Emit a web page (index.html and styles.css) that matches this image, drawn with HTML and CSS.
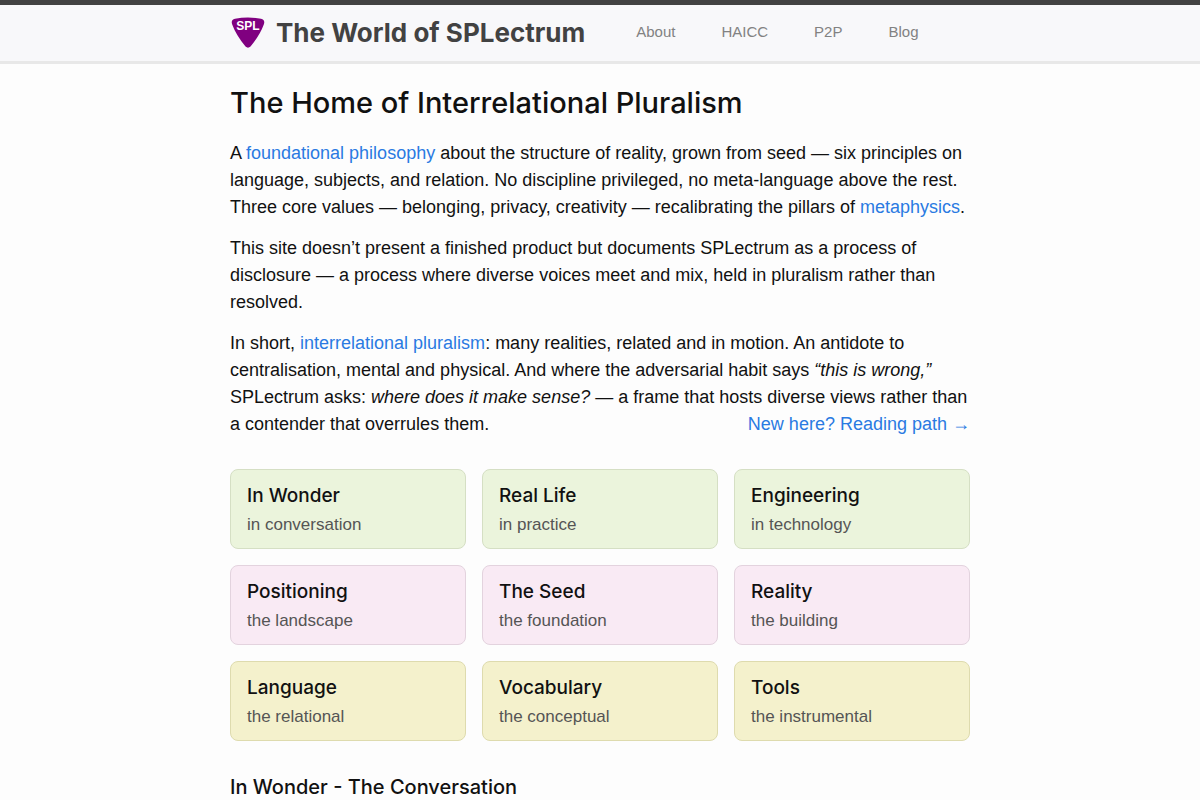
FILE: index.html
```html
<!DOCTYPE html>
<html lang="en">
<head>
<meta charset="utf-8">
<meta name="viewport" content="width=device-width, initial-scale=1">
<title>The World of SPLectrum</title>
<link rel="stylesheet" href="styles.css">
</head>
<body>
<header class="site-header">
  <div class="wrapper header-row">
    <a class="brand" href="#">
      <svg class="logo" viewBox="0 0 35 34" role="img" aria-label="SPL">
        <path d="M5 2.800Q18 .2 31 2.800Q35.500 4 33.800 8.500Q30 19 20.500 30.500Q18 32.800 15.500 30.500Q6 19 2.200 8.500Q.5 4 5 2.800Z" fill="#800080"/>
        <text class="logo-text" x="18" y="14" text-anchor="middle">SPL</text>
      </svg>
      <span class="brand-name">The World of SPLectrum</span>
    </a>
    <nav class="site-nav">
      <a href="#">About</a>
      <a href="#">HAICC</a>
      <a href="#">P2P</a>
      <a href="#">Blog</a>
    </nav>
  </div>
</header>
<main class="wrapper content">
  <h1>The Home of Interrelational Pluralism</h1>
  <p>A <a href="#">foundational philosophy</a> about the structure of reality, grown from seed — six principles on language, subjects, and relation. No discipline privileged, no meta-language above the rest. Three core values — belonging, privacy, creativity — recalibrating the pillars of <a href="#">metaphysics</a>.</p>
  <p>This site doesn’t present a finished product but documents SPLectrum as a process of disclosure — a process where diverse voices meet and mix, held in pluralism rather than resolved.</p>
  <p class="summary">In short, <a href="#">interrelational pluralism</a>: many realities, related and in motion. An antidote to centralisation, mental and physical. And where the adversarial habit says <em>“this is wrong,”</em> SPLectrum asks: <em>where does it make sense?</em> — a frame that hosts diverse views rather than a contender that overrules them. <a class="reading-path" href="#">New here? Reading path →</a></p>
  <div class="cards">
    <a class="card green" href="#"><strong>In Wonder</strong><span>in conversation</span></a>
    <a class="card green" href="#"><strong>Real Life</strong><span>in practice</span></a>
    <a class="card green" href="#"><strong>Engineering</strong><span>in technology</span></a>
    <a class="card pink" href="#"><strong>Positioning</strong><span>the landscape</span></a>
    <a class="card pink" href="#"><strong>The Seed</strong><span>the foundation</span></a>
    <a class="card pink" href="#"><strong>Reality</strong><span>the building</span></a>
    <a class="card yellow" href="#"><strong>Language</strong><span>the relational</span></a>
    <a class="card yellow" href="#"><strong>Vocabulary</strong><span>the conceptual</span></a>
    <a class="card yellow" href="#"><strong>Tools</strong><span>the instrumental</span></a>
  </div>
  <h2>In Wonder - The Conversation</h2>
</main>
</body>
</html>
```
FILE: styles.css
```css
* { box-sizing: border-box; }
body {
  margin: 0;
  background: #fdfdfd;
  color: #111;
  font: 18px/27px "Liberation Sans", Arial, sans-serif;
}
a { color: #2a7ae2; text-decoration: none; }
.wrapper { max-width: 800px; margin: 0 auto; padding: 0 30px; }
.site-header {
  background: #f8f8fa;
  border-top: 5px solid #424242;
  border-bottom: 3px solid #e8e8e8;
}
.header-row { display: flex; align-items: center; min-height: 56px; }
.brand { display: flex; align-items: center; gap: 11px; color: #424242; }
.logo { width: 35px; height: 34px; display: block; }
.logo-text { font: bold 12px "Liberation Sans", Arial, sans-serif; fill: #fff; }
.brand-name { font: 700 26px/54px Inter, sans-serif; white-space: nowrap; }
.site-nav {
  display: flex;
  gap: 46px;
  margin-left: 51px;
  padding-bottom: 3px;
  font-size: 15px;
}
.site-nav a { color: #828282; }
.content h1 { margin: 20px 0 18px; font: 450 29px/38px Inter, sans-serif; }
.content p { margin: 0 0 14px; }
.content .summary { margin-bottom: 31px; }
.reading-path { float: right; }
.cards { display: grid; grid-template-columns: repeat(3, 1fr); gap: 16px; }
.card {
  display: flex;
  flex-direction: column;
  padding: 11px 16px 10px;
  border: 1px solid;
  border-radius: 8px;
}
.card strong { color: #111; font: 500 19px/30px Inter, sans-serif; }
.card span { color: #555; font-size: 17px; }
.green { background: #ebf4dc; border-color: #d5dfc4; }
.pink { background: #f9eaf4; border-color: #e3d3de; }
.yellow { background: #f4f1cc; border-color: #dedbae; }
.content h2 { margin: 32px 0 15px; font: 450 20px/28px Inter, sans-serif; }
```
